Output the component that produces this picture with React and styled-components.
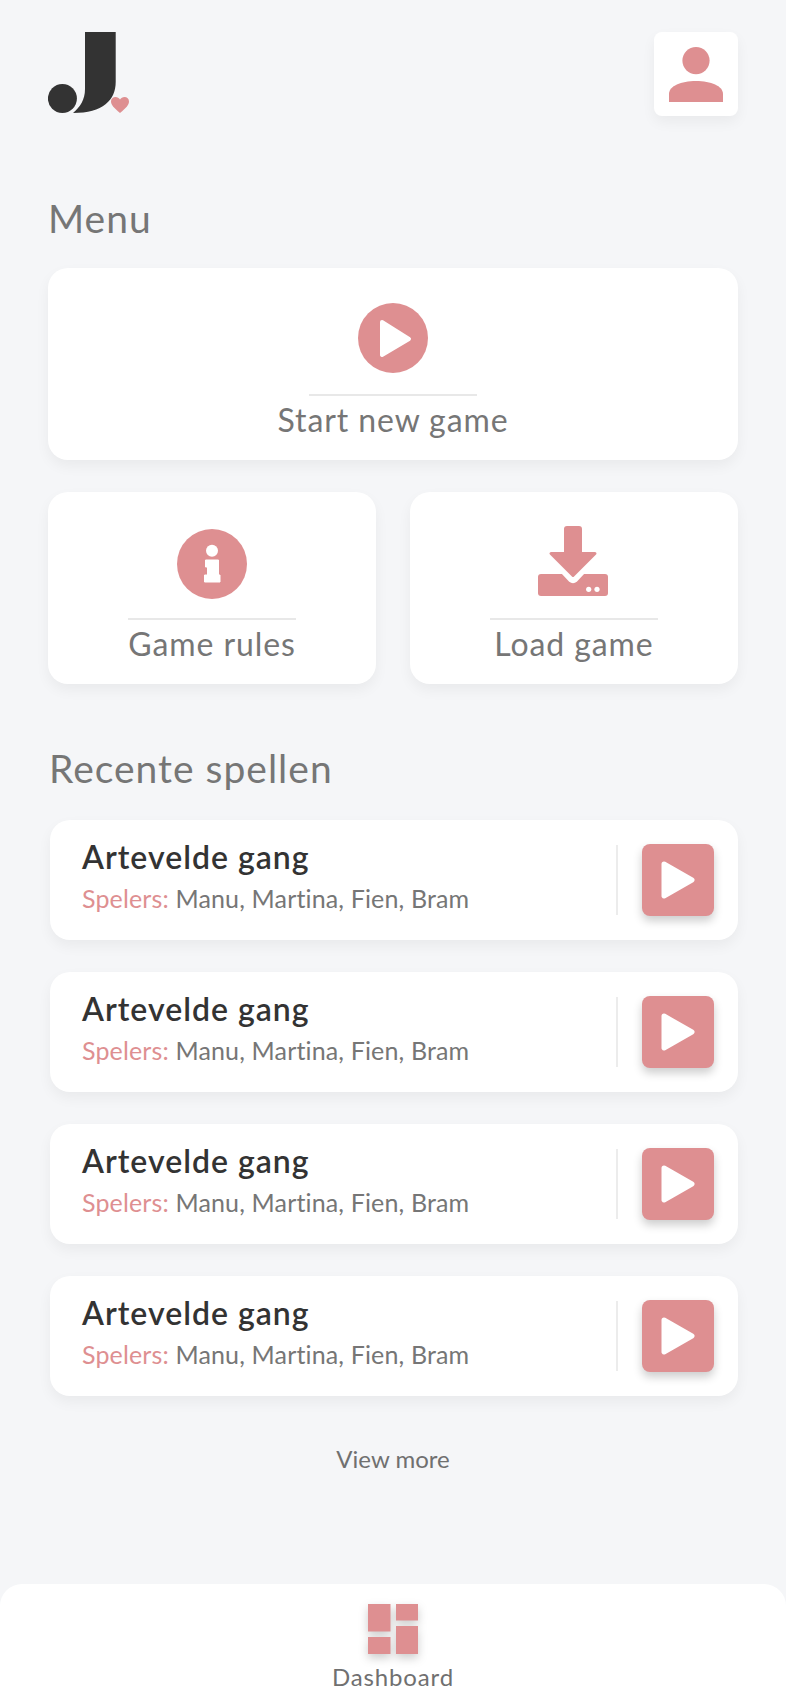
import React from "react";
import styled, { createGlobalStyle } from "styled-components";

const PINK = "#de8f91";
const GREY = "#707070";
const DARK = "#333333";

const GlobalStyle = createGlobalStyle`
  * {
    box-sizing: border-box;
  }

  body {
    margin: 0;
    background: #f5f6f8;
    font-family: "Lato", "Noto Sans", sans-serif;
    color: ${GREY};
  }
`;

const Page = styled.div`
  width: 786px;
  height: 1704px;
  display: flex;
  flex-direction: column;
  overflow: hidden;
`;

const Content = styled.main`
  flex: 1;
  padding: 32px 48px 0;
  display: flex;
  flex-direction: column;
`;

const Header = styled.header`
  display: flex;
  justify-content: space-between;
  align-items: flex-start;
`;

const ProfileButton = styled.button`
  width: 84px;
  height: 84px;
  padding: 0;
  border: none;
  border-radius: 8px;
  background: #fff;
  box-shadow: 0 6px 14px rgba(0, 0, 0, 0.05);
  display: flex;
  align-items: center;
  justify-content: center;
`;

const Heading = styled.h2`
  margin: ${(p) => p.$top}px 0 0 ${(p) => p.$left}px;
  height: 46px;
  font-size: 39px;
  line-height: 46px;
  font-weight: 400;
  letter-spacing: 1px;
  color: #767676;
`;

const MenuGrid = styled.div`
  margin-top: 27px;
  display: grid;
  grid-template-columns: 328px 328px;
  column-gap: 34px;
  row-gap: 32px;
`;

const MenuCard = styled.button`
  grid-column: ${(p) => (p.$wide ? "1 / 3" : "auto")};
  height: 192px;
  padding: 34px 0 0;
  border: none;
  border-radius: 20px;
  background: #fff;
  box-shadow: 0 6px 14px rgba(0, 0, 0, 0.05);
  display: flex;
  flex-direction: column;
  align-items: center;
  font-family: inherit;
`;

const CardDivider = styled.div`
  width: 168px;
  height: 2px;
  margin-top: 18px;
  background: #e8e8e8;
  flex: none;
`;

const CardLabel = styled.span`
  margin-top: 5px;
  font-size: 32px;
  line-height: 38px;
  font-weight: 400;
  letter-spacing: 0.9px;
  color: #767676;
`;

const GameList = styled.div`
  margin: 29px 0 0 2px;
  display: flex;
  flex-direction: column;
  gap: 32px;
`;

const GameRow = styled.div`
  height: 120px;
  padding: 0 24px 0 32px;
  border-radius: 20px;
  background: #fff;
  box-shadow: 0 6px 14px rgba(0, 0, 0, 0.05);
  display: flex;
  align-items: center;
`;

const GameInfo = styled.div`
  flex: 1;
  padding-bottom: 10px;
`;

const GameTitle = styled.div`
  font-size: 32px;
  line-height: 38px;
  font-weight: 600;
  letter-spacing: 1px;
  color: ${DARK};
`;

const Players = styled.div`
  margin-top: 7px;
  font-size: 25px;
  line-height: 30px;
  letter-spacing: 0.15px;
  color: #767676;
`;

const PlayersLabel = styled.span`
  color: ${PINK};
`;

const RowDivider = styled.div`
  width: 2px;
  height: 70px;
  margin-right: 24px;
  background: #ececec;
`;

const PlayButton = styled.button`
  width: 72px;
  height: 72px;
  padding: 0;
  border: none;
  border-radius: 8px;
  background: ${PINK};
  box-shadow: 0 5px 10px rgba(0, 0, 0, 0.2);
  display: flex;
  align-items: center;
  justify-content: center;
`;

const ViewMore = styled.a`
  margin-top: 48px;
  text-align: center;
  font-size: 24px;
  line-height: 30px;
  color: ${GREY};
`;

const BottomNav = styled.nav`
  height: 120px;
  padding-top: 20px;
  border-radius: 22px 22px 0 0;
  background: #fff;
  display: flex;
  flex-direction: column;
  align-items: center;
`;

const NavIcon = styled.svg`
  filter: drop-shadow(0 4px 5px rgba(0, 0, 0, 0.2));
  flex: none;
`;

const NavLabel = styled.span`
  margin-top: 8px;
  font-size: 24px;
  line-height: 30px;
  letter-spacing: 0.85px;
  color: ${GREY};
`;

const Logo = () => (
  <svg width="81" height="81" viewBox="0 0 81 81">
    <circle cx="14.4" cy="66.5" r="14.5" fill={DARK} />
    <path d="M37 0H67.7V50C67.7 68 55 81 25 81C32 75 37 68 37 57Z" fill={DARK} />
    <path
      d="M72 81C66 76 63 73 63 69.5C63 66.5 65 65 67.5 65C69.5 65 71 66 72 67.5C73 66 74.5 65 76.5 65C79 65 81 66.5 81 69.5C81 73 78 76 72 81Z"
      fill={PINK}
    />
  </svg>
);

const PersonIcon = () => (
  <svg width="54" height="55" viewBox="0 0 54 55">
    <circle cx="27" cy="13.6" r="13.6" fill={PINK} />
    <path d="M0 55V47C0 39 12 34 27 34S54 39 54 47V55Z" fill={PINK} />
  </svg>
);

const PlayCircleIcon = () => (
  <svg width="70" height="74" viewBox="0 0 70 74">
    <circle cx="35" cy="36" r="35" fill={PINK} />
    <path
      d="M24 20L51 37L24 53Z"
      fill="#fff"
      stroke="#fff"
      strokeWidth="4"
      strokeLinejoin="round"
    />
  </svg>
);

const InfoIcon = () => (
  <svg width="70" height="74" viewBox="0 0 70 74">
    <circle cx="35" cy="38" r="35" fill={PINK} />
    <circle cx="35" cy="24.7" r="6" fill="#fff" />
    <path
      d="M28.5 34H41.5V49H43V56H27.5V49H30.5V41H28.5Z"
      fill="#fff"
      stroke="#fff"
      strokeLinejoin="round"
    />
  </svg>
);

const LoadIcon = () => (
  <svg width="72" height="74" viewBox="0 0 72 74">
    <path d="M3 48H67A3 3 0 0 1 70 51V67A3 3 0 0 1 67 70H3A3 3 0 0 1 0 67V51A3 3 0 0 1 3 48Z" fill={PINK} />
    <path d="M23 47H47L39 55.5Q35 59 31 55.5Z" fill="#fff" />
    <path
      d="M29 1.5H41A1.5 1.5 0 0 1 42.5 3V27.5H57L35 49.5L13 27.5H27.5V3A1.5 1.5 0 0 1 29 1.5Z"
      fill={PINK}
      stroke={PINK}
      strokeWidth="3"
      strokeLinejoin="round"
    />
    <circle cx="50.7" cy="63.3" r="2.6" fill="#fff" />
    <circle cx="59" cy="63.3" r="2.6" fill="#fff" />
  </svg>
);

const PlayIcon = () => (
  <svg width="34" height="38" viewBox="0 0 34 38">
    <path
      d="M3 3L31 19L3 35Z"
      fill="#fff"
      stroke="#fff"
      strokeWidth="5"
      strokeLinejoin="round"
    />
  </svg>
);

const DashboardIcon = () => (
  <NavIcon width="50" height="50" viewBox="0 0 50 50">
    <path d="M0 0H22.5V27.5H0ZM0 33H22.5V50H0ZM28 0H50V16.5H28ZM28 22H50V50H28Z" fill={PINK} />
  </NavIcon>
);

const games = [1, 2, 3, 4];

const App = () => {
  return (
    <Page>
      <GlobalStyle />
      <Content>
        <Header>
          <Logo />
          <ProfileButton type="button">
            <PersonIcon />
          </ProfileButton>
        </Header>

        <Heading $top={79} $left={0}>Menu</Heading>
        <MenuGrid>
          <MenuCard type="button" $wide>
            <PlayCircleIcon />
            <CardDivider />
            <CardLabel>Start new game</CardLabel>
          </MenuCard>
          <MenuCard type="button">
            <InfoIcon />
            <CardDivider />
            <CardLabel>Game rules</CardLabel>
          </MenuCard>
          <MenuCard type="button">
            <LoadIcon />
            <CardDivider />
            <CardLabel>Load game</CardLabel>
          </MenuCard>
        </MenuGrid>

        <Heading $top={61} $left={1}>Recente spellen</Heading>
        <GameList>
          {games.map((id) => (
            <GameRow key={id}>
              <GameInfo>
                <GameTitle>Artevelde gang</GameTitle>
                <Players>
                  <PlayersLabel>Spelers:</PlayersLabel> Manu, Martina, Fien, Bram
                </Players>
              </GameInfo>
              <RowDivider />
              <PlayButton type="button">
                <PlayIcon />
              </PlayButton>
            </GameRow>
          ))}
        </GameList>
        <ViewMore>View more</ViewMore>
      </Content>
      <BottomNav>
        <DashboardIcon />
        <NavLabel>Dashboard</NavLabel>
      </BottomNav>
    </Page>
  );
};

export default App;
